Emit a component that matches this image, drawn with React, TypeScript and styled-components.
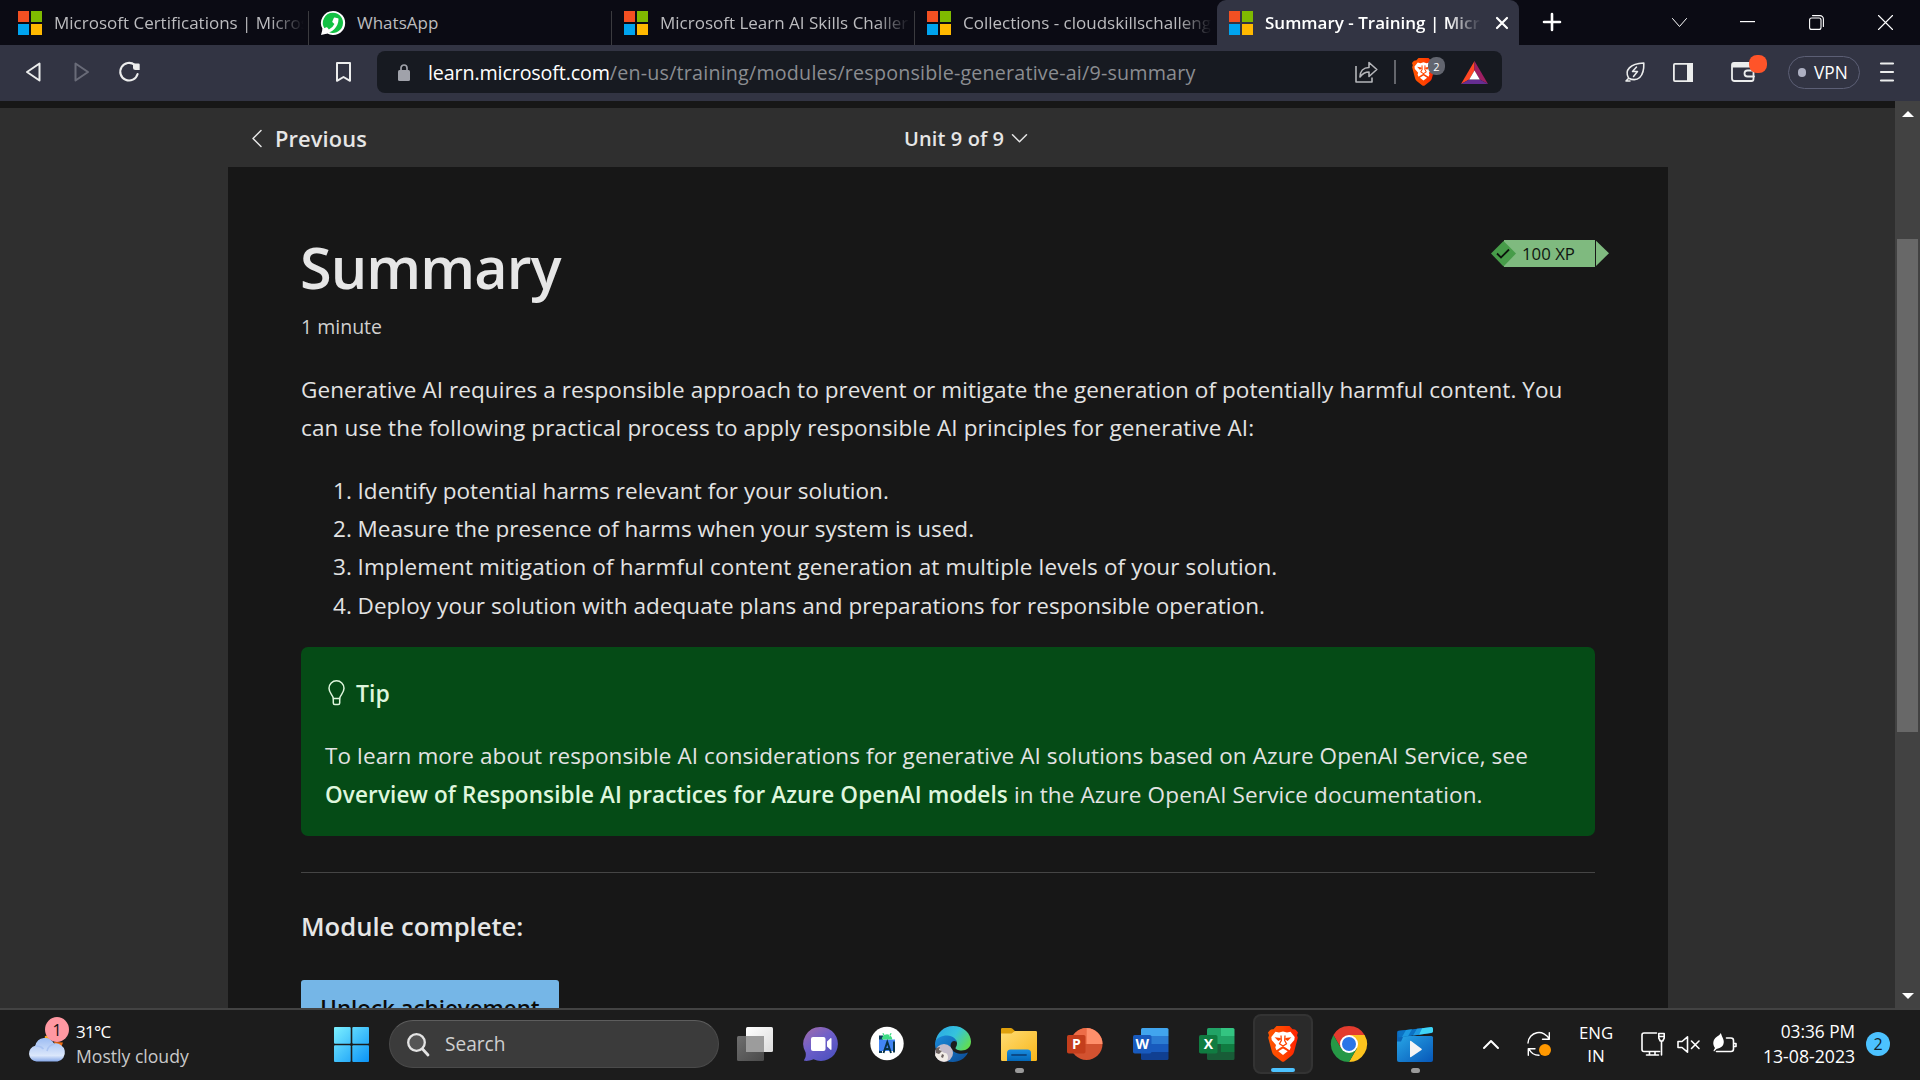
import React from "react";
import styled, { createGlobalStyle } from "styled-components";
import { FaPhoneAlt } from "react-icons/fa";

const GlobalStyle = createGlobalStyle`
  * { box-sizing: border-box; }
  body {
    margin: 0;
    overflow: hidden;
    background: #171717;
    font-family: "Open Sans", "Noto Sans", sans-serif;
  }
  svg { display: block; flex: none; overflow: visible; }
`;

const Screen = styled.div`
  width: 1920px;
  height: 1080px;
  display: flex;
  flex-direction: column;
  overflow: hidden;
`;

const Label = styled.span<{ $size: number; $track?: number; $weight?: number; $color?: string }>`
  font-size: ${(p) => p.$size}px;
  letter-spacing: ${(p) => p.$track ?? 0}px;
  font-weight: ${(p) => p.$weight ?? 400};
  color: ${(p) => p.$color ?? "inherit"};
  white-space: nowrap;
`;

const Spacer = styled.div<{ $w: number }>`
  flex: none;
  width: ${(p) => p.$w}px;
`;

/* ---------- Tab strip ---------- */

const TabStrip = styled.div`
  flex: none;
  height: 45px;
  display: flex;
  background: #0b0b14;
`;

const Tab = styled.div<{ $active?: boolean; $divider?: boolean; $w: number }>`
  width: ${(p) => p.$w}px;
  height: 45px;
  display: flex;
  align-items: center;
  padding: 0 ${(p) => (p.$active ? 11 : 5)}px 0 ${(p) => (p.$active ? 12 : 12)}px;
  border-radius: ${(p) => (p.$active ? "9px 9px 0 0" : "0")};
  color: ${(p) => (p.$active ? "#ffffff" : "#bcbcbf")};
  background: ${(p) =>
    p.$active
      ? "#323443"
      : p.$divider
      ? "linear-gradient(#3b3b3f, #3b3b3f) right 0 top 11px / 1.5px 34px no-repeat"
      : "transparent"};
`;

const TabTitle = styled.div<{ $active?: boolean; $fade?: boolean }>`
  flex: 1;
  min-width: 0;
  white-space: nowrap;
  margin-left: 12px;
  font-size: 17px;
  line-height: 28px;
  font-weight: ${(p) => (p.$active ? 600 : 400)};
  mask-image: ${(p) =>
    p.$fade ? "linear-gradient(to right, #000 calc(100% - 34px), transparent)" : "none"};
`;

const WindowButtons = styled.div`
  flex: 1;
  display: flex;
  align-items: center;
  padding-bottom: 1px;
  color: #fff;
`;

/* ---------- Toolbar ---------- */

const Toolbar = styled.div`
  flex: none;
  height: 56px;
  display: flex;
  align-items: center;
  padding: 0 26px;
  background: #323443;
  color: #eceded;
  padding-bottom: 2px;
`;

const AddressBar = styled.div`
  width: 1125px;
  height: 42px;
  display: flex;
  align-items: center;
  padding: 0 14px 0 21px;
  border-radius: 8px;
  background: #171a21;
`;

const Url = styled.div`
  flex: 1;
  margin-left: 18px;
  padding-top: 1px;
  font-size: 19.7px;
  white-space: nowrap;
  color: #8b8d91;
  letter-spacing: 0.2px;
  line-height: 30px;
`;

const Host = styled.span`
  color: #fff;
  letter-spacing: -0.13px;
`;

const BarDivider = styled.div`
  width: 2px;
  height: 24px;
  background: #64666c;
`;

const BadgeHolder = styled.div`
  position: relative;
`;

const ShieldCount = styled.div`
  position: absolute;
  left: 16px;
  top: -1px;
  width: 17px;
  height: 18px;
  border-radius: 8px;
  display: grid;
  place-items: center;
  background: #62656f;
  color: #fff;
  font-size: 11px;
  line-height: 1;
`;

const AlertDot = styled.div`
  position: absolute;
  left: 18px;
  top: -7px;
  width: 18px;
  height: 18px;
  border-radius: 8px;
  background: #ff5429;
`;

const VpnPill = styled.div`
  width: 72px;
  height: 33px;
  border: 1.5px solid #5c5f75;
  border-radius: 17px;
  display: flex;
  align-items: center;
  padding-left: 9px;
  gap: 8px;
  color: #fff;
`;

const VpnDot = styled.div`
  width: 8px;
  height: 9px;
  border-radius: 4px;
  background: #adb0c2;
`;

/* ---------- Page ---------- */

const Viewport = styled.div`
  height: 907px;
  display: flex;
  overflow: hidden;
  background: #2f2f2f;
`;

const Page = styled.div`
  flex: 1;
  min-width: 0;
  border-top: 7px solid #171717;
  padding: 0 227px 0 228px;
  display: flex;
  flex-direction: column;
`;

const UnitNav = styled.div`
  flex: none;
  height: 59px;
  display: flex;
  align-items: center;
  padding: 2px 0 0 24px;
  color: #e6e6e6;
`;

const Card = styled.article`
  flex: none;
  width: 1440px;
  height: 900px;
  padding: 73px 73px 0;
  background: #171717;
  color: #e3e3e3;
`;

const TitleRow = styled.div`
  display: flex;
  justify-content: space-between;
  height: 70px;
`;

const Title = styled.h1`
  margin: -8px 0 0 -1px;
  font-size: 57.5px;
  line-height: 70px;
  font-weight: 600;
  letter-spacing: -0.9px;
  color: #e6e6e6;
`;

const XpBadge = styled.div`
  display: flex;
  height: 27px;
  margin-right: -14px;
`;

const XpBody = styled.div`
  width: 91px;
  padding-left: 18px;
  line-height: 27px;
  color: #101510;
  background: #7fba7f;
`;

const XpMark = styled.div`
  width: 13px;
  position: relative;
  z-index: 1;
`;

const Duration = styled.p`
  margin: 0;
  font-size: 19.5px;
  line-height: 34px;
  color: #d0d0d0;
`;

const Copy = styled.p`
  margin: 27px 0 0;
  font-size: 22.5px;
  line-height: 38.3px;
`;

const Line = styled.span<{ $track?: number }>`
  display: block;
  white-space: nowrap;
  letter-spacing: ${(p) => p.$track ?? 0}px;
`;

const Steps = styled.ol`
  list-style: none;
  margin: 24px 0 0;
  padding: 0 0 0 32px;
  font-size: 22.5px;
  line-height: 38.4px;
`;

const Step = styled.li<{ $track: number }>`
  display: flex;
  white-space: nowrap;
  letter-spacing: ${(p) => p.$track}px;
`;

const StepNumber = styled.span`
  width: 24.5px;
  letter-spacing: 0;
`;

const TipBox = styled.section`
  height: 189px;
  margin-top: 22px;
  padding: 27px 24px 0;
  border-radius: 7px;
  background: #054b16;
`;

const TipHeading = styled.div`
  display: flex;
  align-items: center;
  gap: 11px;
  height: 38px;
  padding-left: 3px;
  font-size: 23px;
  font-weight: 600;
  color: #dff6dd;
`;

const TipText = styled.p`
  margin: 25px 0 0;
  font-size: 22.5px;
  line-height: 38.3px;
`;

const TipLink = styled.b`
  font-weight: 600;
  letter-spacing: 0.12px;
  color: #dff6dd;
`;

const Rule = styled.hr`
  margin: 36px 0 0;
  border: 0;
  height: 1px;
  background: #454545;
`;

const ModuleTitle = styled.h2`
  margin: 36px 0 0;
  font-size: 25.6px;
  line-height: 36px;
  font-weight: 600;
  color: #e6e6e6;
`;

const UnlockButton = styled.button`
  display: block;
  width: 258px;
  height: 56px;
  margin-top: 35px;
  padding: 0;
  border: 0;
  border-radius: 3px;
  background: #75b6e7;
  color: #0b0b0b;
  font: 600 22.3px/56px "Open Sans", sans-serif;
`;

const ScrollBar = styled.div`
  width: 25px;
  display: flex;
  flex-direction: column;
  align-items: center;
  background: #424242;
  padding: 10px 0 9px;
`;

const Thumb = styled.div`
  width: 21px;
  height: 493px;
  margin-top: 122px;
  margin-bottom: auto;
  background: #686868;
`;

/* ---------- Taskbar ---------- */

const Taskbar = styled.div`
  flex: none;
  height: 72px;
  display: flex;
  align-items: center;
  border-top: 2px solid #434343;
  padding-bottom: 2px;
  background: #1c1c1c;
  color: #fff;
`;

const Weather = styled.div`
  width: 334px;
  display: flex;
  align-items: center;
  padding-left: 28px;
`;

const WeatherIcon = styled.div`
  position: relative;
  width: 48px;
  height: 48px;
  padding-top: 14px;
`;

const WeatherCount = styled.div`
  position: absolute;
  left: 17px;
  top: -3px;
  width: 24px;
  height: 25px;
  border-radius: 50%;
  display: grid;
  place-items: center;
  background: #ff98a2;
  color: #111;
  font-size: 16px;
  line-height: 1;
`;

const Stack = styled.div<{ $align?: string; $leading?: number }>`
  display: flex;
  flex-direction: column;
  align-items: ${(p) => p.$align ?? "flex-start"};
  line-height: ${(p) => p.$leading ?? 24}px;
`;

const SearchBox = styled.div`
  width: 330px;
  height: 48px;
  margin-left: 20px;
  margin-right: 3px;
  display: flex;
  align-items: center;
  gap: 16px;
  padding: 0 17px;
  border: 1.5px solid #4a4a4a;
  border-top-color: #5d5d5d;
  border-radius: 24px;
  background: #3b3b3b;
`;

const AppSlot = styled.div<{ $active?: boolean }>`
  width: 60px;
  height: 60px;
  margin: 0 3px;
  display: flex;
  flex-direction: column;
  align-items: center;
  padding-top: ${(p) => (p.$active ? 10 : 12)}px;
  border: ${(p) => (p.$active ? "2px solid #333" : "0")};
  border-radius: 8px;
  background: ${(p) => (p.$active ? "#2a2a2a" : "transparent")};
`;

const Indicator = styled.div<{ $active?: boolean }>`
  width: ${(p) => (p.$active ? 24 : 9)}px;
  height: 5px;
  margin-top: 6px;
  border-radius: 3px;
  background: ${(p) => (p.$active ? "#4cc2ff" : "#9a9a9a")};
`;

const Tray = styled.div`
  flex: 1;
  display: flex;
  align-items: center;
`;

const Clock = styled.div`
  width: 118px;
`;

const Notices = styled.div`
  width: 24px;
  height: 24px;
  margin-left: 11px;
  border-radius: 50%;
  display: grid;
  place-items: center;
  background: #4cc2ff;
  color: #10222c;
  font-size: 16px;
  line-height: 1;
`;

/* ---------- Icons ---------- */

const MicrosoftLogo = () => (
  <svg width="24" height="24" viewBox="0 0 24 24">
    <path fill="#f25022" d="M0 0h11v11H0z" />
    <path fill="#7fba00" d="M13 0h11v11H13z" />
    <path fill="#00a4ef" d="M0 13h11v11H0z" />
    <path fill="#ffb900" d="M13 13h11v11H13z" />
  </svg>
);

const WhatsAppLogo = () => (
  <svg width="24" height="24" viewBox="0 0 24 24">
    <path fill="#fff" d="M12 0a12 12 0 1 1-5.600 22.500L0 24l1.600-6A12 12 0 0 1 12 0z" />
    <path fill="#12c143" d="M12 1.800A10.100 10.100 0 1 1 6.800 20.600L2.700 21.600l1-3.900A10.100 10.100 0 0 1 12 1.800z" />
    <g transform="translate(24 0) scale(-1 1)">
      <FaPhoneAlt x="6.500" y="6.500" width="11" height="11" color="#fff" />
    </g>
  </svg>
);

const BraveLion = ({ w, h }: { w: number; h: number }) => (
  <svg width={w} height={h} viewBox="0 0 30 36" preserveAspectRatio="none">
    <defs>
      <linearGradient id="brave" x1="0" x2="1">
        <stop offset="0" stopColor="#ff5601" />
        <stop offset=".5" stopColor="#ff4400" />
        <stop offset="1" stopColor="#ff1f01" />
      </linearGradient>
    </defs>
    <path
      fill="url(#brave)"
      d="M8.500 0h13l3 3.300q2.500-.6 3.800 1.200L30 6.500 29 9.200l.8 2.600L26 26q-.6 2.500-2.500 3.800l-7 5.400q-1.500 1.200-3 0l-7-5.400Q4.600 28.500 4 26L.200 11.800 1 9.200 0 6.500l1.700-2Q3 2.700 5.500 3.300z"
    />
    <path
      fill="#fff"
      d="M7.500 5.800l3.500.8 4-1 4 1 3.500-.8 4.200 5.200-.4 3-4.300 5 .7 2.600-1.200 2.600-4-2.800L15 20.300l-2.500 1.100-4 2.800-1.200-2.600.7-2.600-4.300-5-.4-3z"
    />
    <path fill="#fff" d="M15 22.600l4.700 2.700L15 29l-4.700-3.700z" />
    <path fill="#ff4400" d="M6.600 11.200l6 .9.300 1.400-2.600 1.600zM23.400 11.200l-6 .9-.3 1.400 2.600 1.600z" />
    <path fill="none" stroke="#ff4400" strokeWidth="1.300" d="M13 9.500l.3 5-1.800 3.300 3.500 2.200 3.500-2.200-1.800-3.300.3-5" />
  </svg>
);

const TipBulb = () => (
  <svg width="17" height="26" viewBox="0 0 17 26" fill="none" stroke="#dff6dd" strokeWidth="1.500">
    <path d="M5.300 18.500C5 15 1 13 1 8.300a7.500 7.500 0 0 1 15 0c0 4.700-4 6.700-4.300 10.200z" />
    <path d="M5.300 18.500v4.600c0 1 .6 1.500 1.500 1.500h3.400c.9 0 1.500-.5 1.500-1.500v-4.600" />
  </svg>
);

const WindowsLogo = () => (
  <svg width="35" height="35" viewBox="0 0 35 35">
    <defs>
      <linearGradient id="win" x1="0" y1="0" x2="35" y2="35" gradientUnits="userSpaceOnUse">
        <stop offset="0" stopColor="#7cf0ff" />
        <stop offset="1" stopColor="#0a93f7" />
      </linearGradient>
    </defs>
    <g fill="url(#win)">
      <rect width="16.700" height="16.700" rx="1" />
      <rect x="18.300" width="16.700" height="16.700" rx="1" />
      <rect y="18.300" width="16.700" height="16.700" rx="1" />
      <rect x="18.300" y="18.300" width="16.700" height="16.700" rx="1" />
    </g>
  </svg>
);

const TaskViewIcon = () => (
  <svg width="36" height="36" viewBox="0 0 36 36">
    <defs>
      <linearGradient id="tv1" x1="0" y1="0" x2="1" y2="1">
        <stop offset="0" stopColor="#fff" />
        <stop offset="1" stopColor="#dcdcdc" />
      </linearGradient>
      <linearGradient id="tv2" x1="0" y1="0" x2="1" y2="1">
        <stop offset="0" stopColor="#6e6e6e" />
        <stop offset="1" stopColor="#4a4a4a" />
      </linearGradient>
    </defs>
    <rect y="10" width="27" height="25" rx="1.500" fill="url(#tv2)" />
    <rect x="9" y="1" width="27" height="25" rx="1.500" fill="url(#tv1)" />
    <path d="M9 10h18v16H9z" fill="#9c9c9c" />
  </svg>
);

const MeetIcon = () => (
  <svg width="36" height="36" viewBox="0 0 36 36">
    <defs>
      <linearGradient id="meet" x1="0" y1="0" x2=".7" y2="1">
        <stop offset="0" stopColor="#a46ca8" />
        <stop offset=".5" stopColor="#6f5fc9" />
        <stop offset="1" stopColor="#4f52c0" />
      </linearGradient>
    </defs>
    <path fill="url(#meet)" d="M18 1a17 17 0 1 1-7.500 32.300C7 35 3.500 35 1.500 34.800c-.8-.2-.5-1 0-1.600 1.300-2 1.500-4 1.200-6.500A17 17 0 0 1 18 1z" />
    <rect x="8" y="11" width="14.500" height="14" rx="2" fill="#fff" />
    <path fill="#fff" d="M24 15.500l3.500-3.300c.4-.3 1-.1 1 .5v10.600c0 .6-.6.8-1 .5L24 20.500z" />
  </svg>
);

const AndroidStudioIcon = () => (
  <svg width="36" height="36" viewBox="0 0 36 36">
    <circle cx="18" cy="17.500" r="16.700" fill="#fff" />
    <path fill="#0b3c5d" d="M10 9.500h4v5h-4zM10 24h3v3h-3z" />
    <path fill="#4285f4" d="M10 13.500h16V25H11q-1 0-1-1z" />
    <path fill="#3ddc84" d="M12.700 13.500a5.300 5.300 0 0 1 10.600 0zM13.300 7.500l1.200-.5 1.500 3-1 .6zM22.700 7.500l-1.200-.5-1.500 3 1 .6z" />
    <path fill="none" stroke="#073042" strokeWidth="1.900" d="M14.500 27l3.800-11L22 27M16 23h5M25 15.500v11" />
  </svg>
);

const EdgeIcon = () => (
  <svg width="36" height="36" viewBox="0 0 36 36">
    <defs>
      <linearGradient id="edgeTop" x1="0" y1=".2" x2="1" y2=".7">
        <stop offset="0" stopColor="#2ba9e4" />
        <stop offset=".5" stopColor="#35c3dd" />
        <stop offset="1" stopColor="#62dd4e" />
      </linearGradient>
      <linearGradient id="edgeLow" x1="0" y1="0" x2="1" y2="1">
        <stop offset="0" stopColor="#1b8ddd" />
        <stop offset="1" stopColor="#0c4a94" />
      </linearGradient>
    </defs>
    <path fill="url(#edgeLow)" d="M0 18C0 12 6 8 12 8c6 0 9.500 4 9.500 8-2-2-6-1-6 4 0 6 9 10 17.500 6.500-3 6-8.500 9.500-15 9.500C8 36 0 28 0 18z" />
    <path fill="url(#edgeTop)" d="M.500 15.500C2 6.500 9 0 18 0c11 0 18 8 18 15.500 0 6-4.500 9-9.500 9-3.500 0-6-1.300-6-2.500 0-.8 1.500-1.500 1.500-4.500 0-4-4-8-10-8C6.500 9.500 2 12 .500 15.500z" />
    <circle cx="9" cy="27" r="9" fill="#c4bcca" />
    <path fill="#f1ece7" d="M3 22c3 1 4 5 7 5s4 5 2 8c-5 1.500-10-1-12-6z" />
    <path fill="#6c6260" d="M1 22l4-1-1 3 3 1-3 3-3-1zM7 28l2 1-1 3-2-1z" />
  </svg>
);

const ExplorerIcon = () => (
  <svg width="36" height="36" viewBox="0 0 36 36">
    <defs>
      <linearGradient id="folder" x1="0" y1="0" x2="1" y2="1">
        <stop offset="0" stopColor="#ffdc73" />
        <stop offset="1" stopColor="#f8b61a" />
      </linearGradient>
      <linearGradient id="pocket" x1="0" y1="0" x2="0" y2="1">
        <stop offset="0" stopColor="#1a8de0" />
        <stop offset="1" stopColor="#0367b8" />
      </linearGradient>
    </defs>
    <path fill="#dfa00c" d="M0 3.200Q0 2 1.200 2h8.600q1 0 1.700.7L15 6v6H0z" />
    <path fill="url(#folder)" d="M0 7.500h10.500L14 5h20.800Q36 5 36 6.200v27.600q0 1.200-1.200 1.200H1.200Q0 35 0 33.800z" />
    <path fill="url(#pocket)" d="M6 35v-8q0-3.500 3.500-3.500h17q3.500 0 3.500 3.500v8z" />
    <path stroke="#0a4a88" strokeWidth="1.800" strokeLinecap="round" d="M11 29h14" />
  </svg>
);

const OfficeLetter = styled.text`
  fill: #fff;
  font: 700 14px "Open Sans", sans-serif;
  text-anchor: middle;
`;

const PowerPointIcon = () => (
  <svg width="36" height="36" viewBox="0 0 36 36">
    <circle cx="19.500" cy="18" r="16" fill="#d35230" />
    <path fill="#ed6c47" d="M19.500 2v16h-16a16 16 0 0 1 16-16z" />
    <path fill="#ff8f6b" d="M19.500 2a16 16 0 0 1 16 16h-16z" />
    <rect x="0" y="9" width="18.500" height="18.500" rx="1.800" fill="#c43e1c" />
    <OfficeLetter x="9.300" y="23.200">P</OfficeLetter>
  </svg>
);

const WordIcon = () => (
  <svg width="36" height="36" viewBox="0 0 36 36">
    <path fill="#41a5ee" d="M8 3.500Q8 2 9.500 2h24.500Q35.500 2 35.500 3.500V10H8z" />
    <path fill="#2b7cd3" d="M8 10h27.500v8H8z" />
    <path fill="#185abd" d="M8 18h27.500v8H8z" />
    <path fill="#103f91" d="M8 26h27.500v6.500q0 1.500-1.500 1.500H9.500Q8 34 8 32.500z" />
    <rect x="0" y="9" width="18.500" height="18.500" rx="1.800" fill="#185abd" />
    <OfficeLetter x="9.300" y="23.200">W</OfficeLetter>
  </svg>
);

const ExcelIcon = () => (
  <svg width="36" height="36" viewBox="0 0 36 36">
    <path fill="#21a366" d="M8 3.500Q8 2 9.500 2H22v16H8z" />
    <path fill="#33c481" d="M22 2h12q1.500 0 1.500 1.500V10H22z" />
    <path fill="#21a366" d="M22 10h13.500v8H22z" />
    <path fill="#107c41" d="M8 18h27.500v8H8z" />
    <path fill="#185c37" d="M8 18h14v8h13.500v6.500q0 1.500-1.500 1.500H9.500Q8 34 8 32.500z" />
    <rect x="0" y="9" width="18.500" height="18.500" rx="1.800" fill="#107c41" />
    <OfficeLetter x="9.300" y="23.200">X</OfficeLetter>
  </svg>
);

const ChromeIcon = () => (
  <svg width="36" height="36" viewBox="0 0 36 36">
    <path fill="#e33b2e" d="M2.400 9A18 18 0 0 1 33.600 9L18 18l-7.800 4.500z" />
    <path fill="#fcc31e" d="M33.600 9A18 18 0 0 1 18 36l7.800-13.500L18 9z" />
    <path fill="#269846" d="M2.400 9A18 18 0 0 0 18 36l7.800-13.500L18 18l-7.800 4.500z" />
    <circle cx="18" cy="18" r="9" fill="#fff" />
    <circle cx="18" cy="18" r="7" fill="#2a75e8" />
  </svg>
);

const MoviesIcon = () => (
  <svg width="36" height="36" viewBox="0 0 36 36">
    <defs>
      <linearGradient id="clap" x1="0" y1="0" x2="1" y2="1">
        <stop offset="0" stopColor="#27a5e6" />
        <stop offset="1" stopColor="#0757b8" />
      </linearGradient>
    </defs>
    <path fill="url(#clap)" d="M0 10h34.500q1.500 0 1.500 1.500V34q0 2-2 2H2q-2 0-2-2z" />
    <path fill="#0a63b5" d="M0 6.500Q0 5 1.500 4.800L9 3.900 6 11l-2 4.500H0z" />
    <path fill="#1c1c1c" d="M6 10.500l14-2H36v1.500H6z" />
    <path fill="#0b72c4" d="M1 5l34-4v6L1.500 11.500z" />
    <path fill="#1d98e0" d="M9 4.100l6-.8-4 7-6 .8zM20 2.800l5-.6-3 6.500-6 .9z" />
    <path fill="#3fd6f7" d="M25 2.200L34.500 1Q36 1 36 2.500v3Q36 6.500 35 6.700l-13 2z" />
    <path fill="#f4f4f4" d="M13 15.500v15q0 1.200 1.100.6l10.400-7.200q.8-.6 0-1.200l-10.400-7.800q-1.100-.6-1.100.6z" />
  </svg>
);

const CloudIcon = () => (
  <svg width="38" height="28" viewBox="0 0 38 28">
    <defs>
      <linearGradient id="cloud" x1="0" y1="0" x2="0" y2="1">
        <stop offset="0" stopColor="#9dbdf3" />
        <stop offset=".75" stopColor="#dbe7fb" />
        <stop offset="1" stopColor="#86a8e8" />
      </linearGradient>
    </defs>
    <path fill="#f9a825" d="M17 2l5-1 1 6-7 1z" />
    <path fill="#ef6c12" d="M26 8l9 .500-1.500 4-6-1z" />
    <path fill="url(#cloud)" d="M8.500 27.500a8 8 0 0 1-1.200-15.800A10 10 0 0 1 26 9.500a9 9 0 0 1 3.500 18z" />
    <path fill="none" stroke="#a9c3f2" strokeWidth="1.500" d="M19 17a9 9 0 0 1 7.500-7M7.500 12q5-.500 8 3" />
  </svg>
);

const stroke = { fill: "none", stroke: "currentColor", strokeLinecap: "round", strokeLinejoin: "round" } as const;

/* ---------- Data ---------- */

const tabs = [
  { title: "Microsoft Certifications | Micros", logo: <MicrosoftLogo />, divider: true, fade: true },
  { title: "WhatsApp", logo: <WhatsAppLogo />, divider: true, fade: false },
  { title: "Microsoft Learn AI Skills Challer", logo: <MicrosoftLogo />, divider: true, fade: true },
  { title: "Collections - cloudskillschalleng", logo: <MicrosoftLogo />, divider: false, fade: true },
];

const steps = [
  { text: "Identify potential harms relevant for your solution.", track: 0.04 },
  { text: "Measure the presence of harms when your system is used.", track: 0.01 },
  { text: "Implement mitigation of harmful content generation at multiple levels of your solution.", track: 0.13 },
  { text: "Deploy your solution with adequate plans and preparations for responsible operation.", track: 0.07 },
];

const apps = [
  { icon: <TaskViewIcon /> },
  { icon: <MeetIcon /> },
  { icon: <AndroidStudioIcon /> },
  { icon: <EdgeIcon /> },
  { icon: <ExplorerIcon />, running: true },
  { icon: <PowerPointIcon /> },
  { icon: <WordIcon /> },
  { icon: <ExcelIcon /> },
  { icon: <BraveLion w={30} h={36} />, running: true, active: true },
  { icon: <ChromeIcon /> },
  { icon: <MoviesIcon />, running: true },
];

/* ---------- Sections ---------- */

const Tabs = () => (
  <TabStrip>
    <Spacer $w={6} />
    {tabs.map((t, i) => (
      <Tab key={t.title} $w={i === 3 ? 302 : 303} $divider={t.divider}>
        {t.logo}
        <TabTitle $fade={t.fade}>{t.title}</TabTitle>
      </Tab>
    ))}
    <Tab $w={302} $active>
      <MicrosoftLogo />
      <TabTitle $active $fade>Summary - Training | Micro</TabTitle>
      <Spacer $w={15} />
      <svg width="12" height="12" viewBox="0 0 12 12" {...stroke} strokeWidth="2.200">
        <path d="M1 1l10 10M11 1L1 11" />
      </svg>
    </Tab>
    <WindowButtons>
      <Spacer $w={24} />
      <svg width="18" height="18" viewBox="0 0 18 18" {...stroke} strokeWidth="2.600">
        <path d="M9 1v16M1 9h16" />
      </svg>
      <Spacer $w={111} />
      <svg width="15" height="9" viewBox="0 0 15 9" {...stroke} strokeWidth="1">
        <path d="M.500.500l7 8 7-8" />
      </svg>
      <Spacer $w={53} />
      <svg width="15" height="2" viewBox="0 0 15 2">
        <path fill="currentColor" d="M0 0h15v1.200H0z" />
      </svg>
      <Spacer $w={54} />
      <svg width="15" height="15" viewBox="0 0 15 15" {...stroke} strokeWidth="1.100">
        <rect x=".6" y="3" width="11.400" height="11.400" rx="2" />
        <path d="M3.500.600h7.500a3.400 3.400 0 0 1 3.400 3.400v7.500" />
      </svg>
      <Spacer $w={54} />
      <svg width="15" height="15" viewBox="0 0 15 15" {...stroke} strokeWidth="1.100">
        <path d="M.500.500l14 14M14.500.500l-14 14" />
      </svg>
    </WindowButtons>
  </TabStrip>
);

const BrowserToolbar = () => (
  <Toolbar>
    <svg width="15" height="20" viewBox="0 0 15 20" {...stroke} strokeWidth="2">
      <path d="M13.500 1.500v17L1 10z" />
    </svg>
    <Spacer $w={33} />
    <svg width="15" height="20" viewBox="0 0 15 20" {...stroke} stroke="#696b78" strokeWidth="2">
      <path d="M1.500 1.500v17L14 10z" />
    </svg>
    <Spacer $w={30} />
    <svg width="21" height="20" viewBox="0 0 21 20" {...stroke} strokeWidth="2.100">
      <path d="M15.800 3A8.800 8.800 0 1 0 18.600 12" />
      <path fill="currentColor" stroke="none" d="M14 1.500h5.500q1.200 0 1.200 1.200V8h-4.200Q14 8 14 5.500z" />
    </svg>
    <Spacer $w={196} />
    <svg width="15" height="20" viewBox="0 0 15 20" {...stroke} strokeWidth="2">
      <path d="M1 1h13v17.800L7.500 15 1 18.800z" />
    </svg>
    <Spacer $w={26} />
    <AddressBar>
      <svg width="12" height="17" viewBox="0 0 12 17">
        <rect y="6" width="12" height="11" rx="1.500" fill="#a0a2aa" />
        <path d="M3 7V4a3 3 0 0 1 6 0v3" fill="none" stroke="#a0a2aa" strokeWidth="1.700" />
      </svg>
      <Url>
        <Host>learn.microsoft.com</Host>/en-us/training/modules/responsible-generative-ai/9-summary
      </Url>
      <svg width="23" height="22" viewBox="0 0 23 22" {...stroke} stroke="#b5b6ba" strokeWidth="1.600" strokeLinecap="butt">
        <path d="M1 5v16h16v-4.500" />
        <path d="M5 16C5 10 8.500 6.500 14 6.500V1.500l7.800 7-7.800 7V11C10.500 11 7.500 12.500 5 16z" />
      </svg>
      <Spacer $w={16} />
      <BarDivider />
      <Spacer $w={16} />
      <BadgeHolder>
        <BraveLion w={23} h={28} />
        <ShieldCount>2</ShieldCount>
      </BadgeHolder>
      <Spacer $w={26} />
      <svg width="27" height="23" viewBox="0 0 27 23">
        <path fill="#ff4724" d="M13.500 0L0 23l8.200-4.600 5.300-9z" />
        <path fill="#9e1f63" d="M13.500 0L27 23l-8.200-4.600-5.300-9z" />
        <path fill="#662d91" d="M0 23h27l-8.200-4.600H8.200z" />
        <path fill="#fff" d="M13.500 9.400l5.300 9H8.200z" />
      </svg>
    </AddressBar>
    <Spacer $w={123} />
    <svg width="20" height="20" viewBox="0 0 20 20" {...stroke} strokeWidth="1.600">
      <path d="M1 19l2.600-2.800M3.600 16.200C-.800 8.500 5 1.500 18.800 1 19.300 15 12.500 20.500 3.600 16.200zM1 19h4" />
      <path strokeWidth="1.500" d="M11.500 5L7.500 9.500h5l-4 5" />
    </svg>
    <Spacer $w={28} />
    <svg width="20" height="19" viewBox="0 0 20 19">
      <rect x=".9" y=".9" width="18.200" height="17.200" rx="1" fill="none" stroke="currentColor" strokeWidth="1.800" />
      <path fill="currentColor" d="M14 0h6v19h-6z" />
    </svg>
    <Spacer $w={38} />
    <BadgeHolder>
      <svg width="24" height="20" viewBox="0 0 24 20" {...stroke} strokeWidth="1.800">
        <path d="M1 4.500h19.500q2 0 2 2V17q0 2-2 2H3.500Q1 19 1 16.500zM1 4.500V3q0-2 2-2h16v3.500M1 2.800h18" />
        <path d="M23 8.500h-6.500q-3 0-3 3t3 3H23" />
      </svg>
      <AlertDot />
    </BadgeHolder>
    <Spacer $w={33} />
    <VpnPill>
      <VpnDot />
      <Label $size={17.3}>VPN</Label>
    </VpnPill>
    <Spacer $w={20} />
    <svg width="14" height="20" viewBox="0 0 14 20" {...stroke} strokeWidth="2.200">
      <path d="M1 1.500h12M1 10h12M1 18.500h12" />
    </svg>
  </Toolbar>
);

const LearnPage = () => (
  <Viewport>
    <Page>
      <UnitNav>
        <svg width="10" height="17" viewBox="0 0 10 17" {...stroke} strokeWidth="1.500">
          <path d="M9 .500l-8 8 8 8" />
        </svg>
        <Spacer $w={13} />
        <Label $size={21.8} $weight={600} $track={0.15}>Previous</Label>
        <Spacer $w={537} />
        <Label $size={20} $weight={600} $track={0.1}>Unit 9 of 9</Label>
        <Spacer $w={8} />
        <svg width="15" height="9" viewBox="0 0 15 9" {...stroke} strokeWidth="1.500">
          <path d="M.500.800l7 7 7-7" />
        </svg>
      </UnitNav>
      <Card>
        <TitleRow>
          <Title>Summary</Title>
          <XpBadge>
            <XpMark>
              <svg width="25" height="27" viewBox="0 0 25 27">
                <path fill="#479c49" d="M0 13.500L12.500 1 25 13.500 12.500 26.500z" />
                <path fill="none" stroke="#0c140c" strokeWidth="1.800" d="M6 13.500l4 4 8-8" />
              </svg>
            </XpMark>
            <XpBody>
              <Label $size={16.8}>100 XP</Label>
            </XpBody>
            <svg width="14" height="27" viewBox="0 0 14 27">
              <path fill="#7fba7f" d="M1 .700l13 12.500L1 26z" />
            </svg>
          </XpBadge>
        </TitleRow>
        <Duration>1 minute</Duration>
        <Copy>
          <Line $track={0.08}>
            Generative AI requires a responsible approach to prevent or mitigate the generation of potentially harmful content. You
          </Line>
          <Line $track={0.14}>
            can use the following practical process to apply responsible AI principles for generative AI:
          </Line>
        </Copy>
        <Steps>
          {steps.map((s, i) => (
            <Step key={s.text} $track={s.track}>
              <StepNumber>{i + 1}.</StepNumber>
              <span>{s.text}</span>
            </Step>
          ))}
        </Steps>
        <TipBox>
          <TipHeading>
            <TipBulb />
            Tip
          </TipHeading>
          <TipText>
            <Line $track={0.11}>
              To learn more about responsible AI considerations for generative AI solutions based on Azure OpenAI Service, see
            </Line>
            <Line $track={0.14}>
              <TipLink>Overview of Responsible AI practices for Azure OpenAI models</TipLink> in the Azure OpenAI Service documentation.
            </Line>
          </TipText>
        </TipBox>
        <Rule />
        <ModuleTitle>Module complete:</ModuleTitle>
        <UnlockButton>Unlock achievement</UnlockButton>
      </Card>
    </Page>
    <ScrollBar>
      <svg width="12" height="6" viewBox="0 0 12 6"><path fill="#fff" d="M0 6l6-6 6 6z" /></svg>
      <Thumb />
      <svg width="12" height="6" viewBox="0 0 12 6"><path fill="#fff" d="M0 0h12L6 6z" /></svg>
    </ScrollBar>
  </Viewport>
);

const SystemTray = () => (
  <Tray>
    <Spacer $w={35} />
    <svg width="16" height="9" viewBox="0 0 16 9" {...stroke} strokeWidth="2">
      <path d="M1 8l7-7 7 7" />
    </svg>
    <Spacer $w={28} />
    <svg width="24" height="24" viewBox="0 0 24 24" {...stroke} strokeWidth="1.400">
      <path d="M1 11A11 11 0 0 1 22 7M22.300.800V7.300H15.500M12 23.300A11 11 0 0 1 2 17M1.300 23.200v-6.500H8" />
      <circle cx="18" cy="18" r="6" fill="#ff9800" stroke="none" />
    </svg>
    <Spacer $w={28} />
    <Stack $align="center" $leading={23}>
      <Label $size={16.8}>ENG</Label>
      <Label $size={17}>IN</Label>
    </Stack>
    <Spacer $w={28} />
    <svg width="24" height="24" viewBox="0 0 24 24" {...stroke} strokeWidth="1.600">
      <path d="M15.500 1H3Q1 1 1 3v14.500q0 2 2 2h15.500M8.500 19.500V23M14 19.500V23M5.500 23h12M20.500 9.500V23" />
      <path d="M17.800 1.500h5.400v4.700l-1.500 2.800h-2.400l-1.500-2.800zM17.800 4.500h5.400" />
    </svg>
    <Spacer $w={12} />
    <svg width="23" height="17" viewBox="0 0 23 17" {...stroke} strokeWidth="1.600">
      <path d="M1 5.500h4L10.500.800v15.400L5 11.500H1zM14.500 5l7.500 7.500M22 5l-7.500 7.500" />
    </svg>
    <Spacer $w={13} />
    <svg width="24" height="22" viewBox="0 0 24 22" {...stroke} strokeWidth="1.600">
      <path d="M13.500 5h4.500q2.500 0 2.500 2.500v8.500q0 2.500-2.500 2.500H3.500M21 10.500h2v3h-2" />
      <path fill="currentColor" stroke="none" d="M7.800 0q1 3 2.200 5.500c1.800 4 .5 8-3.500 9.500l-3 1-2.500 2.500-.5-1 1.500-2.500C-.8 11 0 6.500 3.500 4 5.500 2.500 6.800 2 7.800 0z" />
    </svg>
    <Clock>
      <Stack $align="flex-end">
        <Label $size={17.3}>03:36 PM</Label>
        <Label $size={17.7}>13-08-2023</Label>
      </Stack>
    </Clock>
    <Notices>2</Notices>
  </Tray>
);

export default function App() {
  return (
    <Screen>
      <GlobalStyle />
      <Tabs />
      <BrowserToolbar />
      <LearnPage />
      <Taskbar>
        <Weather>
          <WeatherIcon>
            <CloudIcon />
            <WeatherCount>1</WeatherCount>
          </WeatherIcon>
          <Stack>
            <Label $size={17} $track={-0.7}>31°C</Label>
            <Label $size={17.6} $color="#c9c9c9">Mostly cloudy</Label>
          </Stack>
        </Weather>
        <WindowsLogo />
        <SearchBox>
          <svg width="22" height="23" viewBox="0 0 22 23" {...stroke} stroke="#e4e4e4" strokeWidth="2.300">
            <circle cx="9.500" cy="9.500" r="8.300" fill="#555" />
            <path d="M15.500 16l5.500 6" strokeWidth="2.800" />
          </svg>
          <Label $size={19.1} $color="#cfcfcf">Search</Label>
        </SearchBox>
        {apps.map((a, i) => (
          <AppSlot key={i} $active={a.active}>
            {a.icon}
            {a.running && <Indicator $active={a.active} />}
          </AppSlot>
        ))}
        <SystemTray />
      </Taskbar>
    </Screen>
  );
}
